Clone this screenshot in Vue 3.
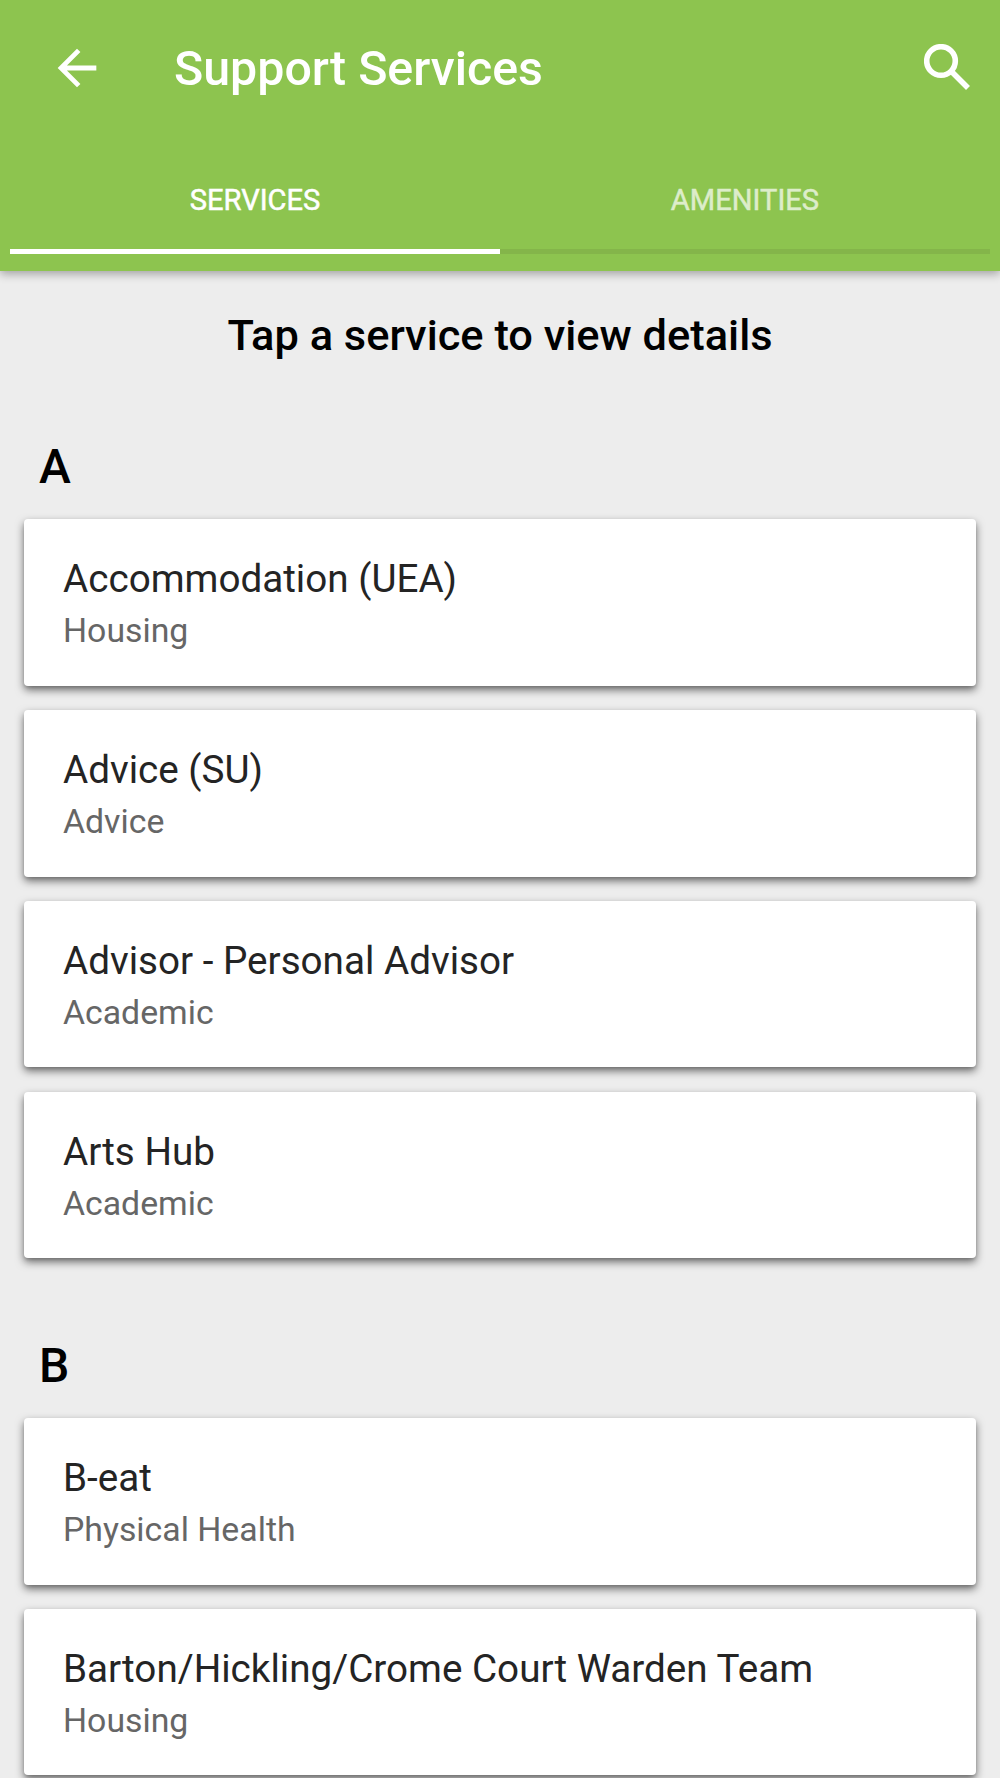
<script setup>
const sections = [
  { letter: 'A', items: [
    { name: 'Accommodation (UEA)', type: 'Housing' },
    { name: 'Advice (SU)', type: 'Advice' },
    { name: 'Advisor - Personal Advisor', type: 'Academic' },
    { name: 'Arts Hub', type: 'Academic' },
  ] },
  { letter: 'B', items: [
    { name: 'B-eat', type: 'Physical Health' },
    { name: 'Barton/Hickling/Crome Court Warden Team', type: 'Housing' },
  ] },
]
</script>

<template>
  <div class="screen">
    <header class="header">
      <div class="toolbar">
        <svg class="back" viewBox="0 0 24 24"><path d="M20 11H7.83l5.59-5.59L12 4l-8 8 8 8 1.41-1.41L7.83 13H20v-2z" /></svg>
        <h1>Support Services</h1>
        <svg class="search" viewBox="0 0 46 46"><circle cx="17" cy="17" r="14.3" /><path d="M28 28 29.5 29.5 44 44" /></svg>
      </div>
      <nav class="tabs">
        <div class="tab active">SERVICES</div>
        <div class="tab">AMENITIES</div>
      </nav>
    </header>
    <main>
      <p class="hint">Tap a service to view details</p>
      <section v-for="s in sections" :key="s.letter">
        <h2>{{ s.letter }}</h2>
        <article v-for="i in s.items" :key="i.name" class="card">
          <div class="name">{{ i.name }}</div>
          <div class="type">{{ i.type }}</div>
        </article>
      </section>
    </main>
  </div>
</template>

<style>
body { margin: 0; background: #ededed; overflow: hidden; }
</style>

<style scoped>
.screen { width: 1000px; height: 1778px; overflow: hidden; background: #ededed; font-family: Roboto, sans-serif; color: #000; }
.header { position: relative; box-sizing: border-box; height: 271px; background: #8dc44f; box-shadow: 0 3px 9px rgba(0, 0, 0, .32); color: #fff; }
.toolbar { height: 136px; display: flex; align-items: center; box-sizing: border-box; padding: 0 30px 0 48px; }
.back { width: 58px; height: 58px; fill: #fff; }
h1 { margin: 1px 0 0 68px; font-size: 48.3px; line-height: 56px; font-weight: 500; flex: 1; }
.search { width: 46px; height: 46px; margin-top: -3px; fill: none; stroke: #fff; stroke-width: 5.6; }
.tabs { display: flex; padding: 0 10px; }
.tab { flex: 1; box-sizing: border-box; height: 118px; border-bottom: 5px solid #84b54a; text-align: center; line-height: 128px; font-size: 29.1px; -webkit-text-stroke: .5px currentColor; color: #ddedca; }
.tab.active { border-color: #fff; color: #fff; }
.hint { margin: 0; padding-top: 39px; text-align: center; font-size: 43.4px; line-height: 52px; font-weight: 500; }
section { padding: 77px 24px 0; }
section + section { padding-top: 55.4px; }
h2 { margin: 0 0 24px 15px; font-size: 48px; line-height: 56px; font-weight: 500; }
.card { box-sizing: border-box; height: 166.7px; margin-bottom: 24.2px; padding: 35px 39px 0; background: #fff; border-radius: 4px; box-shadow: 0 4px 8px rgba(0, 0, 0, .54), 0 2px 3px rgba(0, 0, 0, .1); }
.name { font-size: 38.63px; line-height: 50px; color: #242424; white-space: nowrap; }
.type { margin-top: 5px; font-size: 33.8px; line-height: 44px; color: #666; }
</style>
